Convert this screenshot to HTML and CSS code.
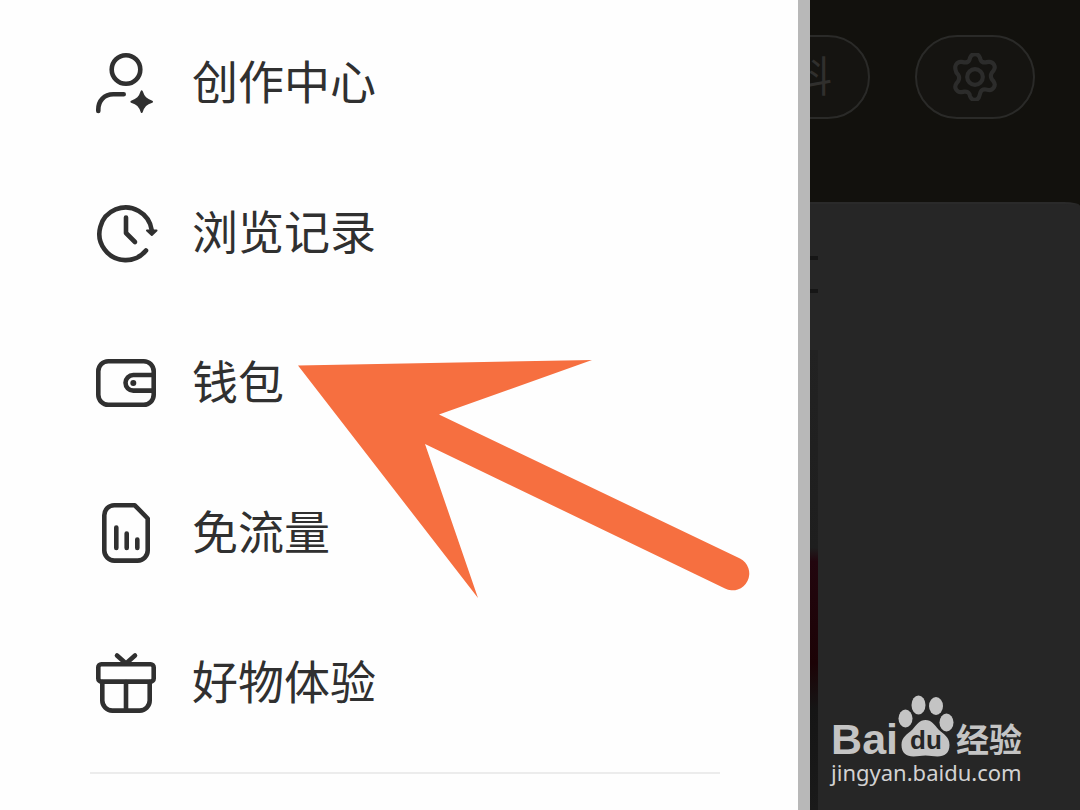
FILE: index.html
```
<!DOCTYPE html>
<html lang="zh-CN">
   <head>
      <meta charset="UTF-8">
      <meta name="viewport" content="width=device-width, initial-scale=1.0">
      <title>钱包</title>
      <link rel="stylesheet" href="styles.css">
   </head>
   <body>
      <aside class="drawer">
         <nav class="menu">
            <a class="item" href="#create">
               <svg class="icon" viewBox="0 0 72 72">
                  <circle cx="36" cy="22.5" r="14.3"/>
                  <path d="M8.3 64v-1.5c0-9 6-15.2 15-15.2h10.4"/>
                  <path class="fill" d="M51.7 44.4c2 6 4.3 8.3 10.3 10.3-6 2-8.3 4.3-10.3 10.3-2-6-4.3-8.3-10.3-10.3 6-2 8.3-4.3 10.3-10.3z"/>
               </svg>
               <span>创作中心</span>
            </a>
            <a class="item" href="#history">
               <svg class="icon" viewBox="0 0 72 72">
                  <path d="M61.7 33A26.3 26.3 0 1 0 56 53.5"/>
                  <path class="fill" d="M57 33.5h9.5l-4.7 4.5z"/>
                  <path d="M36 20.5v15.5l9 9"/>
               </svg>
               <span>浏览记录</span>
            </a>
            <a class="item" href="#wallet">
               <svg class="icon" viewBox="0 0 72 72">
                  <rect x="8.3" y="14.3" width="55.4" height="43.4" rx="10"/>
                  <path d="M63.5 28H43.3a7.8 7.8 0 0 0 0 15.6h20.2"/>
                  <circle class="dot" cx="43.3" cy="36" r="3"/>
               </svg>
               <span>钱包</span>
            </a>
            <a class="item" href="#data">
               <svg class="icon" viewBox="0 0 72 72">
                  <path d="M24.3 8.3h20.5L57.7 21.5V53.6a10 10 0 0 1-10 10H24.3a10 10 0 0 1-10-10V18.3a10 10 0 0 1 10-10z"/>
                  <path d="M26.3 30.5v20.5M36.7 36.5v14.5M47.3 42.5v8.5"/>
               </svg>
               <span>免流量</span>
            </a>
            <a class="item" href="#goods">
               <svg class="icon" viewBox="0 0 72 72">
                  <rect x="8.3" y="17.3" width="55.4" height="17.3" rx="3"/>
                  <path d="M12.3 35v18.6a10 10 0 0 0 10 10h27.4a10 10 0 0 0 10-10V35M36 35v28M27 8.500l9 8 9-8"/>
               </svg>
               <span>好物体验</span>
            </a>
         </nav>
         <hr class="rule">
      </aside>
      <main class="page">
         <header class="top">
            <button class="pill" type="button">编辑资料</button>
            <button class="pill gear" type="button" aria-label="设置">
               <svg viewBox="1 1 46 46">
                  <path d="M19.3 5.5Q20.5 2 24 2t4.700 3.500l.6 2q1.400 3 5 2.500l2.500-.5q3.500-.5 5.300 2.500t-.3 5.800l-1.600 2q-2 3.200 0 6.400l1.600 2q2.100 2.800.3 5.800t-5.300 2.500l-2.500-.5q-3.600-.5-5 2.500l-.6 2Q27.500 46 24 46t-4.700-3.500l-.6-2q-1.400-3-5-2.500l-2.500.5q-3.500.5-5.300-2.500t.3-5.800l1.600-2q2-3.200 0-6.400l-1.600-2Q4.100 15 5.900 12t5.300-2.500l2.500.5q3.600.5 5-2.500z"/>
                  <circle cx="24" cy="24" r="7.5"/>
               </svg>
            </button>
         </header>
         <section class="sheet">
            <div class="tab"></div>
            <div class="cover"></div>
         </section>
      </main>
      <svg class="arrow" viewBox="0 0 452 240">
         <path d="M0 5.5L294 0 141 54.5 442 198.5A16.5 16.5 0 0 1 427 228.5L127 84 180 238z"/>
      </svg>
      <div class="mark">
         <div class="brand">
            <span class="bai">Bai</span>
            <span class="paw">
               <svg viewBox="0 0 56 62">
                  <ellipse cx="7.5" cy="23.5" rx="7" ry="9"/>
                  <ellipse cx="20.5" cy="10" rx="7" ry="9.5"/>
                  <ellipse cx="38" cy="11" rx="7" ry="9"/>
                  <ellipse cx="48.5" cy="27.5" rx="7" ry="9"/>
                  <path d="M27.5 25c6 0 9 5 13 9.500 5 5 11 7 11 15.500 0 8-5 11.500-12 11.500-5 0-7-1-12-1s-7 1-12 1c-7 0-12-3.500-12-11.500 0-8.500 6-10.500 11-15.500 4-4.500 7-9.500 13-9.500z"/>
               </svg>
               <b>du</b>
            </span>
            <span class="jing">经验</span>
         </div>
         <div class="site">jingyan.baidu.com</div>
      </div>
   </body>
</html>
```

FILE: styles.css
```
*{
   box-sizing:border-box;
}
body{
   margin:0;
   min-height:100vh;
   display:flex;
   position:relative;
   overflow:hidden;
   background:#262626;
   font-family:"Noto Sans CJK SC",sans-serif;
}
.drawer{
   flex:0 0 75%;
   padding:8px 78px 0 90px;
   background:#fefefe;
   border-right:12px solid #b8b8b8;
}
.menu{
   display:flex;
   flex-direction:column;
}
.item{
   display:flex;
   align-items:center;
   gap:30px;
   height:150px;
   color:#303030;
   font-size:46px;
   line-height:60px;
   text-decoration:none;
}
.item span{
   padding-bottom:8px;
}
.icon{
   width:72px;
   height:72px;
   fill:none;
   stroke:#303030;
   stroke-width:4.6;
   stroke-linecap:round;
   stroke-linejoin:round;
}
.fill{
   fill:#303030;
   stroke-width:2;
}
.dot{
   fill:#303030;
   stroke:none;
}
.rule{
   margin:14px 0 0;
   border:none;
   border-top:2px solid #ececec;
}
.page{
   flex:1;
   min-width:0;
   overflow:hidden;
   display:flex;
   flex-direction:column;
   background:#12110d;
}
.top{
   display:flex;
   justify-content:flex-end;
   gap:45px;
   padding:35px 45px 83px 0;
}
.pill{
   flex:none;
   height:84px;
   padding:0 36px 8px;
   border:2px solid #2a2a28;
   border-radius:42px;
   background:#151411;
   color:#302f2d;
   font-family:inherit;
   font-size:42px;
}
.gear{
   width:120px;
   padding:0 34px;
}
.gear svg{
   display:block;
   width:48px;
   height:48px;
   fill:none;
   stroke:#2c2c2b;
   stroke-width:4;
}
.sheet{
   flex:1;
   background:#262626;
   border-top:2px solid #2a2a2a;
   border-top-right-radius:16px 4px;
}
.tab{
   width:8px;
   height:37px;
   margin-top:52px;
   border-top:4px solid #161616;
   border-bottom:4px solid #161616;
}
.cover{
   width:8px;
   height:460px;
   margin-top:57px;
   background:linear-gradient(#222 0,#1e1e1e 43%,#22060e 46%,#1c0306 68%,#151515 78%,#1a1a1a 100%);
}
.arrow{
   position:absolute;
   left:298px;
   top:360px;
   width:452px;
   fill:#f66f40;
}
.mark{
   position:absolute;
   right:58px;
   bottom:23px;
   color:#c4c4c4;
}
.brand{
   display:flex;
   align-items:flex-end;
   height:62px;
}
.bai{
   font:bold 43px/36px "Liberation Sans",sans-serif;
}
.paw{
   position:relative;
   width:56px;
   height:62px;
}
.paw svg{
   display:block;
   fill:#c4c4c4;
}
.paw b{
   position:absolute;
   left:0;
   right:0;
   bottom:3px;
   text-align:center;
   color:#262626;
   font:bold 26px/28px "Liberation Sans",sans-serif;
}
.jing{
   margin-left:2px;
   font-size:33px;
   font-weight:bold;
   line-height:38px;
}
.site{
   font:22px/30px "Noto Sans",sans-serif;
   color:#d2d2d2;
}
```
